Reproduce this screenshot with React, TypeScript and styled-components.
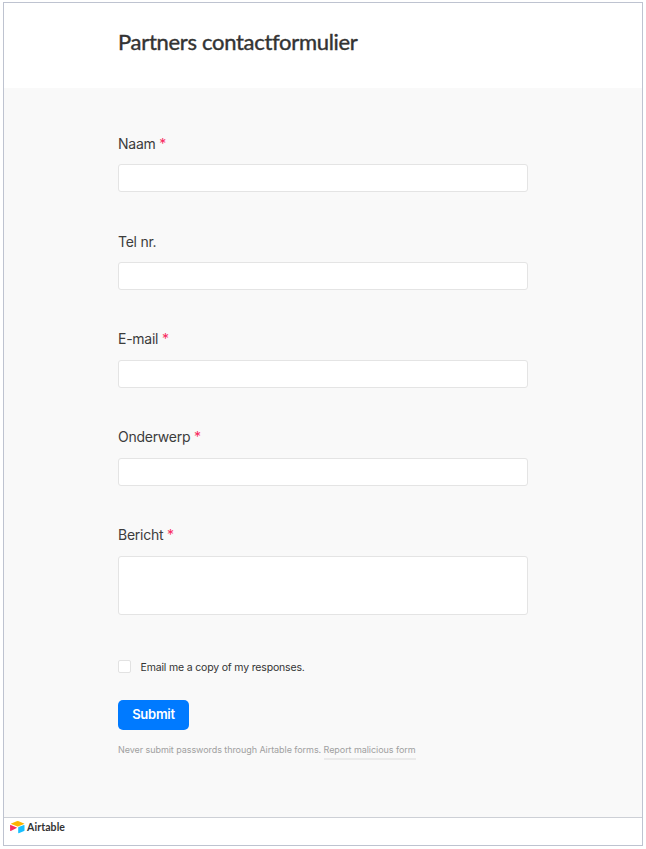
import React from 'react';
import styled, { createGlobalStyle } from 'styled-components';

const GlobalStyle = createGlobalStyle`
  * { box-sizing: border-box; }
  body {
    margin: 0;
    background: #fff;
    font-family: Inter, "Liberation Sans", sans-serif;
    color: #333;
  }
`;

const Frame = styled.div`
  display: flex;
  flex-direction: column;
  width: 640px;
  height: 844px;
  margin: 2px 0 0 3px;
  border: 1px solid #bec3d0;
`;

const Header = styled.header`
  height: 85px;
  padding: 23px 114px 0;
`;

const Title = styled.h1`
  margin: 0;
  font: 400 22px/32px Lato, sans-serif;
  letter-spacing: -0.3px;
  -webkit-text-stroke: 0.4px #333;
  white-space: nowrap;
`;

const Form = styled.form`
  flex: 1;
  padding: 46px 114px 0;
  background: #f9f9f9;
`;

const Field = styled.div`
  height: 98px;
  &:last-of-type { height: 134px; }
`;

const Label = styled.label<{ $raised: boolean }>`
  display: block;
  height: 30px;
  font-size: 14px;
  line-height: ${(p) => (p.$raised ? 18 : 20)}px;
  letter-spacing: -0.25px;
  color: #3c3c3c;
  white-space: nowrap;
`;

const Required = styled.span`
  color: #f82b60;
`;

const control = `
  display: block;
  width: 410px;
  margin: 0;
  padding: 0 8px;
  border: 1px solid #e4e4e4;
  border-radius: 3px;
  background: #fff;
  outline: none;
  resize: none;
  font: inherit;
`;

const Input = styled.input`${control} height: 28px;`;
const TextArea = styled.textarea`${control} height: 59px;`;

const CopyRow = styled.label`
  display: flex;
  align-items: center;
  gap: 9.5px;
  height: 14px;
  font-size: 10.5px;
  letter-spacing: -0.17px;
  white-space: nowrap;
`;

const Checkbox = styled.input`
  appearance: none;
  width: 13px;
  height: 13px;
  margin: 0 0 2px;
  border: 1px solid #e2e2e2;
  border-radius: 2px;
  background: #fff;
`;

const Submit = styled.button`
  display: block;
  width: 71px;
  height: 30px;
  margin: 26px 0 13px;
  padding: 0 0 2px;
  border: 0;
  border-radius: 5px;
  background: #007aff;
  color: #fff;
  font: 600 13px/28px Inter, sans-serif;
  letter-spacing: -0.25px;
`;

const Notice = styled.p`
  margin: 0;
  font-size: 9px;
  line-height: 14px;
  letter-spacing: -0.065px;
  color: #a0a0a0;
  white-space: nowrap;
`;

const ReportLink = styled.a`
  display: inline-block;
  height: 17px;
  border-bottom: 2px solid #eaeaea;
`;

const Footer = styled.footer`
  display: flex;
  align-items: flex-start;
  gap: 2px;
  height: 28px;
  padding: 3px 6px;
  border-top: 1px solid #cdd0d6;
`;

const Brand = styled.span`
  font: 700 10.5px/13px Lato, sans-serif;
  letter-spacing: 0.1px;
`;

const Logo = () => (
  <svg width="15" height="13" viewBox="0 0 15 13" aria-hidden="true">
    <path d="M1.2 2.4 6.7.3q1-.4 2 0l5.3 2.1q.5.3 0 .6L8.6 5.2q-.9.4-1.8 0L1.2 3q-.5-.3 0-.6Z" fill="#fcb400" />
    <path d="M8.2 6.7q0-.4.4-.6L14 4q.5-.2.5.4v5.1q0 .4-.4.6l-5.4 2.1q-.5.2-.5-.4Z" fill="#18bfff" />
    <path d="M.1 4.3q0-.6.6-.4l6 2.5q.5.3 0 .6L.8 9.9q-.7.3-.7-.4Z" fill="#f82b60" />
  </svg>
);

const fields = [
  { name: 'Naam', required: true },
  { name: 'Tel nr.', required: false },
  { name: 'E-mail', required: true, raised: true },
  { name: 'Onderwerp', required: true, raised: true },
  { name: 'Bericht', required: true, raised: true, multiline: true },
];

export default function App() {
  return (
    <>
      <GlobalStyle />
      <Frame>
        <Header>
          <Title>Partners contactformulier</Title>
        </Header>
        <Form>
          {fields.map((field) => (
            <Field key={field.name}>
              <Label htmlFor={field.name} $raised={!!field.raised}>
                {field.name}
                {field.required && <Required> *</Required>}
              </Label>
              {field.multiline ? <TextArea id={field.name} /> : <Input id={field.name} />}
            </Field>
          ))}
          <CopyRow>
            <Checkbox type="checkbox" />
            Email me a copy of my responses.
          </CopyRow>
          <Submit type="button">Submit</Submit>
          <Notice>
            Never submit passwords through Airtable forms. <ReportLink>Report malicious form</ReportLink>
          </Notice>
        </Form>
        <Footer>
          <Logo />
          <Brand>Airtable</Brand>
        </Footer>
      </Frame>
    </>
  );
}
